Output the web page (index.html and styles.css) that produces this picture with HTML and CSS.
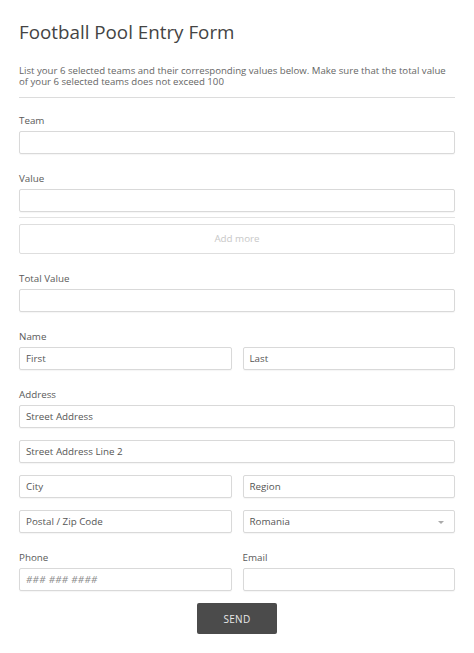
FILE: index.html
```html
<!DOCTYPE html>
<html>
<head>
<meta charset="utf-8">
<link rel="stylesheet" href="styles.css">
</head>
<body>
<form class="form">
  <h1 class="title">Football Pool Entry Form</h1>
  <p class="desc">List your 6 selected teams and their corresponding values below. Make sure that the total value of your 6 selected teams does not exceed 100</p>
  <hr class="rule">

  <div class="field field-first">
    <label class="label">Team</label>
    <div class="input"></div>
  </div>
  <div class="field">
    <label class="label">Value</label>
    <div class="input"></div>
  </div>
  <hr class="rule rule-sub">
  <div class="addmore">Add more</div>

  <div class="field">
    <label class="label">Total Value</label>
    <div class="input"></div>
  </div>

  <div class="field">
    <label class="label">Name</label>
    <div class="row">
      <div class="input">First</div>
      <div class="input">Last</div>
    </div>
  </div>

  <div class="field">
    <label class="label">Address</label>
    <div class="stack">
      <div class="input">Street Address</div>
      <div class="input">Street Address Line 2</div>
      <div class="row">
        <div class="input">City</div>
        <div class="input">Region</div>
      </div>
      <div class="row">
        <div class="input">Postal / Zip Code</div>
        <div class="input select">Romania<span class="caret"></span></div>
      </div>
    </div>
  </div>

  <div class="row">
    <div class="field">
      <label class="label">Phone</label>
      <div class="input phone">### ### ####</div>
    </div>
    <div class="field">
      <label class="label">Email</label>
      <div class="input"></div>
    </div>
  </div>

  <div class="actions">
    <button type="button" class="send">SEND</button>
  </div>
</form>
</body>
</html>
```

FILE: styles.css
```css
html, body {
  margin: 0;
  padding: 0;
  background: #fff;
}
body {
  font-family: "Open Sans", "Liberation Sans", sans-serif;
  color: #555;
}
.form {
  width: 436px;
  padding: 20px 19px 0;
}
.title {
  margin: 0;
  font-size: 18.8px;
  line-height: 25px;
  font-weight: 400;
  color: #444;
}
.desc {
  margin: 21px 0 0;
  font-size: 9.65px;
  line-height: 10.5px;
  color: #666;
}
.rule {
  margin: 10px 0 0;
  border: 0;
  border-top: 1px solid #dcdcdc;
  height: 0;
}
.field {
  margin-top: 12px;
}
.field-first {
  margin-top: 10px;
}
.label {
  display: block;
  padding-top: 6px;
  margin-bottom: 3px;
  font-size: 9.8px;
  line-height: 14px;
  color: #5a5a5a;
}
.input {
  box-sizing: border-box;
  height: 23px;
  border: 1px solid #d9d9d9;
  border-radius: 2px;
  box-shadow: 0 1px 1px rgba(0,0,0,0.04);
  padding: 0 6px;
  font-size: 9.8px;
  line-height: 21px;
  color: #555;
  background: #fff;
  position: relative;
}
.row {
  display: grid;
  grid-template-columns: 1fr 1fr;
  column-gap: 11px;
}
.stack {
  display: flex;
  flex-direction: column;
  row-gap: 12px;
}
.rule-sub {
  margin-top: 5px;
  border-top-color: #e3e3e3;
}
.addmore {
  box-sizing: border-box;
  margin-top: 6px;
  height: 30px;
  border: 1px solid #dedede;
  border-radius: 2px;
  text-align: center;
  font-size: 9.8px;
  line-height: 28px;
  color: #c8c8c8;
}
.select .caret {
  position: absolute;
  right: 10px;
  top: 10px;
  width: 0;
  height: 0;
  border-left: 3px solid transparent;
  border-right: 3px solid transparent;
  border-top: 3px solid #aaa;
}
.phone {
  font-style: italic;
  color: #888;
  letter-spacing: 0.3px;
}
.actions {
  margin-top: 12px;
  display: flex;
  justify-content: center;
}
.send {
  width: 80px;
  height: 31px;
  border: 0;
  border-radius: 2px;
  background: #4b4b4b;
  color: #e8e8e8;
  font-family: "Open Sans", "Liberation Sans", sans-serif;
  font-size: 10px;
  letter-spacing: 0.3px;
  padding: 0;
}
```
